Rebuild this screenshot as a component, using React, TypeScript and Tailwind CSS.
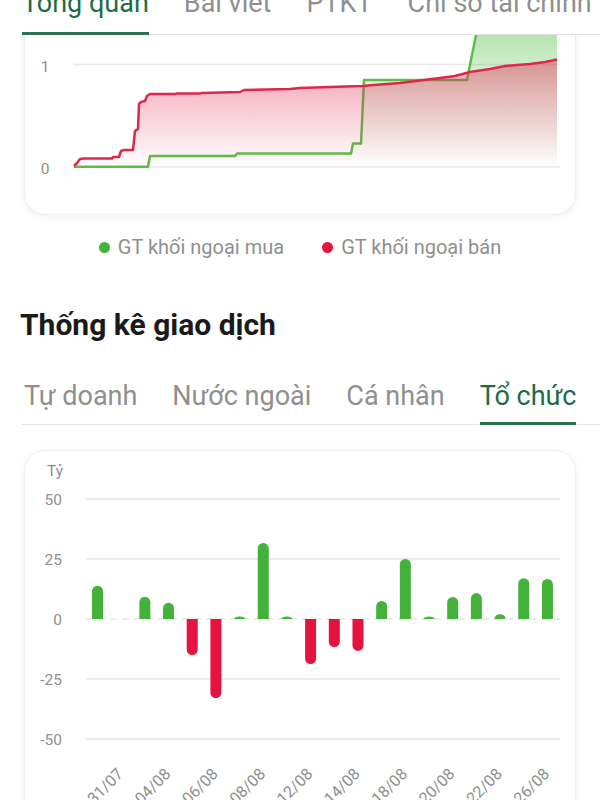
import React from "react";

const GREEN = "#43b23a";
const RED = "#e5143f";

const topTabs = ["Tổng quan", "Bài viết", "PTKT", "Chỉ số tài chính"];
const statTabs = ["Tự doanh", "Nước ngoài", "Cá nhân", "Tổ chức"];

// foreign flow lines, drawn straight in page coordinates
const redLine: [number, number][] = [
  [74, 166], [77, 163], [80, 159], [84, 158.5], [112, 158.5], [113, 157], [119, 157],
  [121, 151], [124, 150], [133, 150], [135, 131], [138, 129], [139, 104], [141, 102],
  [145, 101], [147, 96], [150, 94], [175, 94], [177, 93.5], [200, 93.5], [202, 93],
  [240, 92], [244, 90], [290, 89], [300, 88], [330, 87], [362, 86], [380, 84.5],
  [400, 83], [420, 80.5], [440, 78], [455, 76], [470, 72], [490, 69], [505, 66],
  [530, 64], [545, 62], [557, 59.5],
];

const greenLine: [number, number][] = [
  [74, 166.7], [148, 166.7], [150, 156], [235, 156], [237, 153.5], [351, 153.5],
  [353, 143.5], [361, 143.5], [364, 80], [467, 80], [479, 20], [557, 16],
];

const pts = (l: [number, number][]) => l.map(([x, y]) => `${x},${y}`).join(" ");
const area = (l: [number, number][]) => `${pts(l)} 557,167 74,167`;

const bars = [13.9, 0, 9.3, 6.8, -15, -33, 1, 31.7, 1, -18.8, -11.7, -13.3, 7.5, 25, 1, 9.2, 10.8, 2, 17, 16.7];
const dates = ["30/07", "31/07", "01/08", "04/08", "05/08", "06/08", "07/08", "08/08", "11/08", "12/08", "13/08", "14/08", "15/08", "18/08", "19/08", "20/08", "21/08", "22/08", "25/08", "26/08"];

const ZERO = 619;
const PX = 2.4; // px per tỷ

function barPath(cx: number, v: number) {
  const x0 = cx - 5.5;
  const h = Math.abs(v) * PX;
  const ry = Math.min(5.5, h);
  if (v >= 0) {
    const y = ZERO - h + ry;
    return `M${x0},${ZERO} L${x0},${y} A5.5,${ry} 0 0 1 ${x0 + 11},${y} L${x0 + 11},${ZERO} Z`;
  }
  const y = ZERO + h - ry;
  return `M${x0},${ZERO} L${x0},${y} A5.5,${ry} 0 0 0 ${x0 + 11},${y} L${x0 + 11},${ZERO} Z`;
}

function Tabs({ items, active, className }: { items: string[]; active: number; className: string }) {
  return (
    <div className={`flex items-end gap-[35px] ml-[22px] border-b border-[#e2e2e2] ${className}`}>
      {items.map((t, i) => (
        <div
          key={t}
          className={`-mb-px whitespace-nowrap text-[27px] leading-[32px] border-b-[3px] ${
            i === active ? "text-[#1d6b45] border-[#2b7350]" : "text-[#8f8f8f] border-transparent"
          }`}
        >
          {t}
        </div>
      ))}
    </div>
  );
}

function ForeignChart() {
  return (
    <svg width={550} height={209} viewBox="25 5 550 209" className="block">
      <defs>
        <linearGradient id="gFill" gradientUnits="userSpaceOnUse" x1="0" y1="35" x2="0" y2="167">
          <stop offset="0" stopColor="#5cc34f" stopOpacity="0.45" />
          <stop offset="0.45" stopColor="#5cc34f" stopOpacity="0.15" />
          <stop offset="1" stopColor="#5cc34f" stopOpacity="0" />
        </linearGradient>
        <linearGradient id="rFill" gradientUnits="userSpaceOnUse" x1="0" y1="60" x2="0" y2="167">
          <stop offset="0" stopColor="#e0294f" stopOpacity="0.45" />
          <stop offset="1" stopColor="#e0294f" stopOpacity="0" />
        </linearGradient>
      </defs>
      <line x1={73} x2={560} y1={64.5} y2={64.5} stroke="#e8e8e8" strokeWidth={1.5} />
      <line x1={73} x2={560} y1={167} y2={167} stroke="#e8e8e8" strokeWidth={1.5} />
      <text x={45} y={71.5} textAnchor="middle" fontSize={15.5} fill="#8e8e8e">1</text>
      <text x={45} y={173.5} textAnchor="middle" fontSize={15.5} fill="#8e8e8e">0</text>
      <polygon points={area(greenLine)} fill="url(#gFill)" />
      <polyline points={pts(greenLine)} fill="none" stroke="#5cbd4b" strokeWidth={2.5} strokeLinejoin="round" />
      <polygon points={area(redLine)} fill="url(#rFill)" />
      <polyline points={pts(redLine)} fill="none" stroke="#e0264d" strokeWidth={2.5} strokeLinejoin="round" />
    </svg>
  );
}

function TradeChart() {
  const grid = [
    { v: "50", y: 499 },
    { v: "25", y: 559 },
    { v: "0", y: 619 },
    { v: "-25", y: 679 },
    { v: "-50", y: 739 },
  ];
  return (
    <svg width={550} height={380} viewBox="25 451 550 380" className="block">
      <text x={47} y={476} fontSize={15.5} fill="#8e8e8e">Tỷ</text>
      {grid.map((g) => (
        <g key={g.v}>
          <line
            x1={86}
            x2={560}
            y1={g.y}
            y2={g.y}
            stroke="#e6e6e6"
            strokeWidth={1.5}
            strokeDasharray={g.v === "0" ? "7 5" : undefined}
          />
          <text x={62} y={g.y + 6} textAnchor="end" fontSize={15.5} fill="#8e8e8e">
            {g.v}
          </text>
        </g>
      ))}
      {bars.map((v, i) => {
        const cx = 97.5 + i * 23.68;
        return <path key={i} d={barPath(cx, v)} fill={v >= 0 ? GREEN : RED} />;
      })}
      {dates.map((d, i) => {
        if (i % 2 === 0) return null;
        const x = 97.5 + i * 23.68 + 3;
        const y = 775;
        return (
          <text key={d} x={x} y={y} textAnchor="end" fontSize={16} fill="#8e8e8e" transform={`rotate(-45 ${x} ${y})`}>
            {d}
          </text>
        );
      })}
    </svg>
  );
}

export default function App() {
  return (
    <div className="w-[600px] h-[800px] overflow-hidden bg-white font-['Roboto',sans-serif]">
      <Tabs items={topTabs} active={0} className="h-[35px] [&>div]:pb-[13px]" />

      {/* chart card, scrolled so its top is under the tabs */}
      <div className="px-[25px] pb-[19px] overflow-hidden">
        <div className="-mt-[30px] h-[209px] rounded-[20px] bg-white shadow-[0_2px_8px_rgba(0,0,0,0.07)] ring-1 ring-[#efefef] overflow-hidden">
          <ForeignChart />
        </div>
      </div>

      <div className="h-[28px] flex items-center justify-center gap-[38px] text-[20px] text-[#8f8f8f]">
        <div className="flex items-center gap-[8px]">
          <span className="w-[11px] h-[11px] rounded-full" style={{ background: GREEN }} />
          <span>GT khối ngoại mua</span>
        </div>
        <div className="flex items-center gap-[8px]">
          <span className="w-[11px] h-[11px] rounded-full" style={{ background: RED }} />
          <span>GT khối ngoại bán</span>
        </div>
      </div>

      <h2 className="mt-[46px] px-[20px] text-[30px] leading-[35px] font-bold text-[#1a1a1a]">
        Thống kê giao dịch
      </h2>

      <Tabs items={statTabs} active={3} className="mt-[38px] pl-[2px] [&>div]:pb-[10px]" />

      <div className="px-[25px] pt-[26px] pb-[20px]">
        <div className="rounded-[20px] bg-white shadow-[0_2px_8px_rgba(0,0,0,0.07)] ring-1 ring-[#efefef] overflow-hidden">
          <TradeChart />
        </div>
      </div>
    </div>
  );
}
